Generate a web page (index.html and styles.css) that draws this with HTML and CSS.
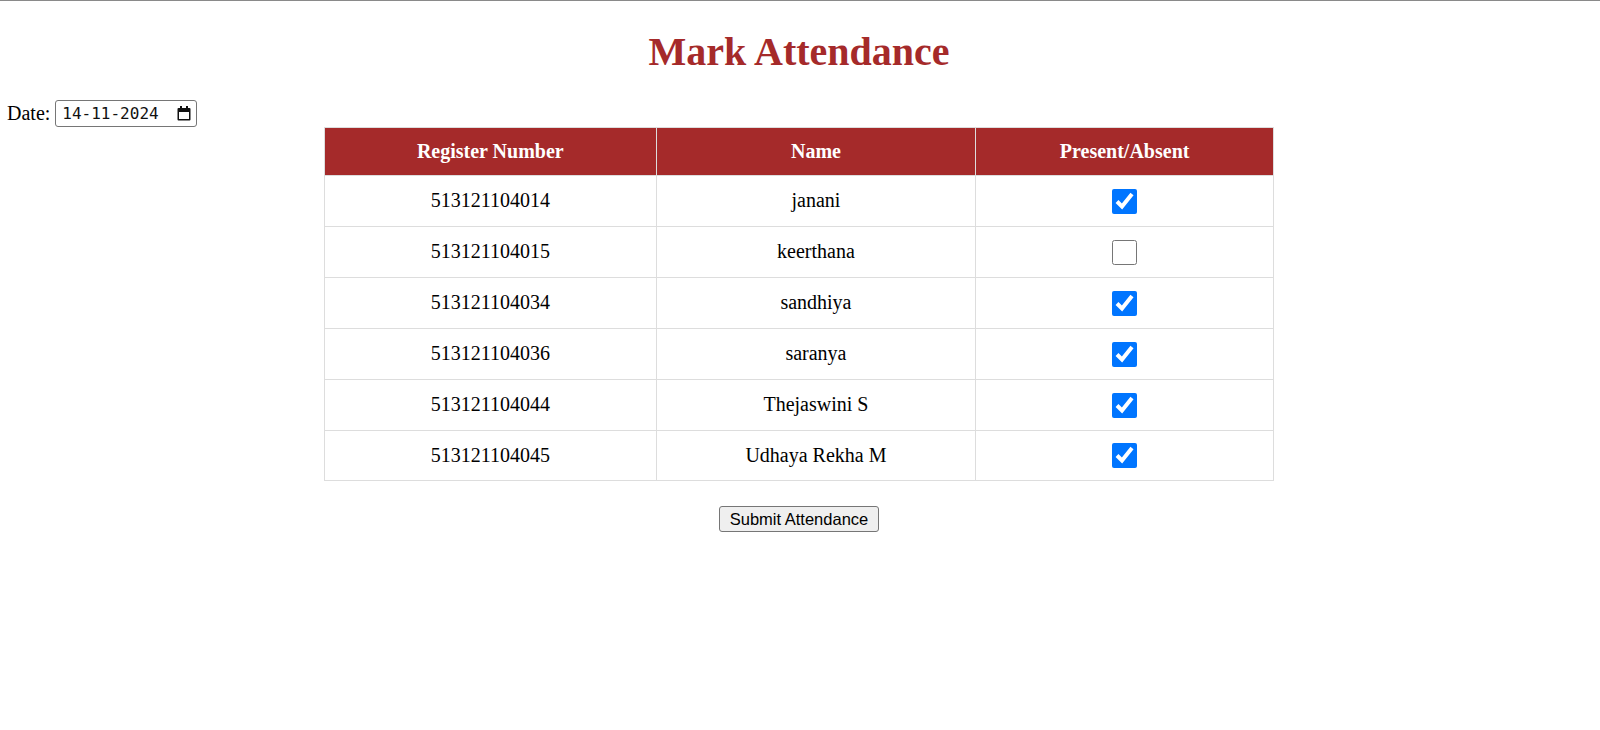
FILE: index.html
```html
<!DOCTYPE html>
<html lang="en">
<head>
<meta charset="utf-8">
<title>Mark Attendance</title>
<link rel="stylesheet" href="styles.css">
</head>
<body>
<h1 class="title">Mark Attendance</h1>
<div class="date-row">
  <label class="date-label">Date:</label>
  <span class="date-input">
    <span class="date-value">14-11-2024</span>
    <svg class="cal-icon" width="14" height="15" viewBox="0 0 14 15" aria-hidden="true">
      <rect x="3" y="0" width="2" height="3" fill="#111"/>
      <rect x="9" y="0" width="2" height="3" fill="#111"/>
      <path d="M1.5 2h11a1 1 0 0 1 1 1v10.5a1 1 0 0 1-1 1h-11a1 1 0 0 1-1-1V3a1 1 0 0 1 1-1z M2 6v7h10V6z" fill="#111" fill-rule="evenodd"/>
    </svg>
  </span>
</div>
<table class="att-table">
  <colgroup>
    <col class="c1"><col class="c2"><col class="c3">
  </colgroup>
  <thead>
    <tr><th>Register Number</th><th>Name</th><th>Present/Absent</th></tr>
  </thead>
  <tbody>
    <tr><td>513121104014</td><td>janani</td><td><input class="chk" type="checkbox" checked></td></tr>
    <tr><td>513121104015</td><td>keerthana</td><td><input class="chk" type="checkbox"></td></tr>
    <tr><td>513121104034</td><td>sandhiya</td><td><input class="chk" type="checkbox" checked></td></tr>
    <tr><td>513121104036</td><td>saranya</td><td><input class="chk" type="checkbox" checked></td></tr>
    <tr><td>513121104044</td><td>Thejaswini S</td><td><input class="chk" type="checkbox" checked></td></tr>
    <tr><td>513121104045</td><td>Udhaya Rekha M</td><td><input class="chk" type="checkbox" checked></td></tr>
  </tbody>
</table>
<div class="actions">
  <button class="submit-btn" type="button">Submit Attendance</button>
</div>
</body>
</html>
```
FILE: styles.css
```css
html {
  border-top: 1px solid #8a8a8a;
  background: #fff;
}
body {
  margin: 10px 9px 10px 7px;
  font-family: "Liberation Serif", "Times New Roman", serif;
  font-size: 20px;
  color: #000;
}
.title {
  font-size: 40px;
  font-weight: bold;
  color: #a52a2a;
  text-align: center;
  margin: 17px 0 25px;
}
.date-row {
  display: flex;
  align-items: center;
  height: 27px;
}
.date-label {
  margin-right: 5px;
}
.date-input {
  display: inline-flex;
  align-items: center;
  box-sizing: border-box;
  width: 142px;
  height: 27px;
  border: 1px solid #767676;
  border-radius: 3px;
  padding: 0 5px 0 6px;
  justify-content: space-between;
}
.date-value {
  font-family: "DejaVu Sans Mono", "Liberation Mono", monospace;
  font-size: 16px;
  color: #111;
}
.cal-icon {
  display: block;
}
.att-table {
  border-collapse: collapse;
  width: 950px;
  margin: 0 auto;
}
.c1 { width: 332px; }
.c2 { width: 320px; }
.c3 { width: 298px; }
.att-table th,
.att-table td {
  border: 1px solid #ddd;
  text-align: center;
  padding: 12px;
}
.att-table th {
  background: #a52a2a;
  color: #fff;
  font-weight: bold;
}
.chk {
  width: 25px;
  height: 25px;
  margin: 0;
  vertical-align: middle;
}
.actions {
  text-align: center;
  margin-top: 25px;
}
.submit-btn {
  font-family: "Liberation Sans", Arial, sans-serif;
  font-size: 16.5px;
  color: #000;
  background: #efefef;
  border: 1px solid #767676;
  border-radius: 3px;
  height: 26px;
  width: 160px;
  padding: 0 8px;
}
```
